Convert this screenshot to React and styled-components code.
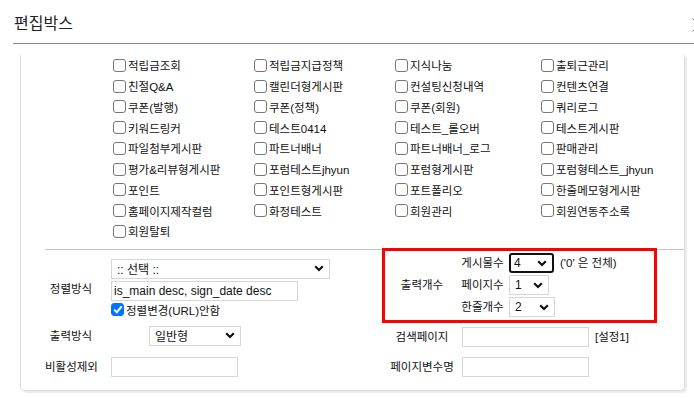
import React from "react"
import styled, { createGlobalStyle } from "styled-components"

const FONT = `"Liberation Sans", "Noto Sans CJK KR", sans-serif`
const LINE_C = "#dcdcdc"
const INPUT_C = "#d6d6d6"

const BOARDS = [
  "적립금조회", "적립금지급정책", "지식나눔", "출퇴근관리",
  "친절Q&A", "캘린더형게시판", "컨설팅신청내역", "컨텐츠연결",
  "쿠폰(발행)", "쿠폰(정책)", "쿠폰(회원)", "쿼리로그",
  "키워드링커", "테스트0414", "테스트_롤오버", "테스트게시판",
  "파일첨부게시판", "파트너배너", "파트너배너_로그", "판매관리",
  "평가&리뷰형게시판", "포럼테스트jhyun", "포럼형게시판", "포럼형테스트_jhyun",
  "포인트", "포인트형게시판", "포트폴리오", "한줄메모형게시판",
  "홈페이지제작컬럼", "화정테스트", "회원관리", "회원연동주소록",
  "회원탈퇴",
]

const GlobalStyle = createGlobalStyle`
  html, body {
    margin: 0;
    padding: 0;
    background: #fff;
    overflow: hidden;
  }
  body {
    font-family: ${FONT};
    font-size: 12px;
    color: #222;
  }
`

const Page = styled.div`
  width: 694px;
  height: 398px;
  overflow: hidden;
`

const Header = styled.header`
  display: flex;
  justify-content: space-between;
  align-items: center;
  height: 43px;
  margin-left: 13px;
  border-bottom: 1px solid #8a8a8a;
`

const Title = styled.h1`
  margin: 0 0 0 1px;
  font-family: "Noto Sans CJK KR", sans-serif;
  font-size: 16px;
  font-weight: normal;
  color: #222;
`

const Close = styled.svg`
  flex: none;
  margin: 6px -12px 0 0;
`

const Body = styled.div`
  padding: 11px 0 0 20px;
`

const Card = styled.div`
  width: 665px;
  box-sizing: border-box;
  border: 1px solid ${LINE_C};
  border-top: none;
  border-radius: 0 0 5px 5px;
  box-shadow: 2px 2px 1px rgba(0, 0, 0, 0.08);
  padding: 0 0 7px 24px;
`

const BoardGrid = styled.div`
  display: grid;
  grid-template-columns: 141px 141px 146px 110px;
  grid-auto-rows: 20.75px;
  align-items: center;
  margin-left: 68px;
`

const BoardItem = styled.label`
  display: flex;
  align-items: center;
  gap: 2px;
  font-size: 11.5px;
  white-space: nowrap;
  color: #111;
`

const Box = styled.span`
  flex: none;
  width: 13px;
  height: 13px;
  box-sizing: border-box;
  border-radius: 3px;
  border: 1px solid ${(p) => (p.$checked ? "#0075ff" : "#767676")};
  background: ${(p) => (p.$checked ? "#0075ff" : "#fff")};
  display: flex;
  align-items: center;
  justify-content: center;
`

const Lower = styled.div`
  display: grid;
  grid-template-columns: 337px 275px;
  margin-top: 7px;
  border-top: 1px solid #c4c4c4;
`

const Field = styled.div`
  display: flex;
  align-items: ${(p) => (p.$center ? "center" : "flex-start")};
  height: ${(p) => p.$h || 30}px;
  padding-top: ${(p) => p.$pt || 0}px;
  box-sizing: border-box;
`

const Label = styled.span`
  flex: none;
  width: ${(p) => p.$w}px;
  text-align: center;
  line-height: 20px;
  font-size: 11.5px;
  white-space: nowrap;
  color: #111;
  padding-top: ${(p) => p.$pt || 0}px;
`

const Stack = styled.div`
  display: flex;
  flex-direction: column;
  gap: 2px;
  margin-left: ${(p) => p.$ml || 0}px;
  padding-top: ${(p) => p.$pt || 0}px;
`

const SelectBox = styled.div`
  display: flex;
  align-items: center;
  justify-content: space-between;
  width: ${(p) => p.$w}px;
  height: 20px;
  box-sizing: border-box;
  margin-left: ${(p) => p.$ml || 0}px;
  padding: 0 5px 0 ${(p) => (p.$focus ? 3 : 5)}px;
  border: ${(p) => (p.$focus ? "2px solid #111" : `1px solid ${INPUT_C}`)};
  border-radius: ${(p) => (p.$focus ? 3 : 0)}px;
  background: #fff;
  font-size: 12px;
  color: #111;
  white-space: nowrap;
`

const TextInput = styled.div`
  width: ${(p) => p.$w}px;
  height: 20px;
  box-sizing: border-box;
  margin-left: ${(p) => p.$ml || 0}px;
  padding: 0 2px;
  border: 1px solid ${INPUT_C};
  font-size: 12px;
  line-height: 18px;
  color: #111;
  white-space: nowrap;
  overflow: hidden;
`

const CheckRow = styled.label`
  display: flex;
  align-items: center;
  gap: 2px;
  height: 14px;
  font-size: 11.5px;
  color: #111;
`

const Note = styled.span`
  margin-left: 6px;
  font-size: 11.5px;
  color: #111;
  white-space: nowrap;
  line-height: 20px;
`

const Highlight = styled.div`
  display: flex;
  align-items: center;
  height: 75px;
  margin-top: -2px;
  box-sizing: border-box;
  border: 3px solid #ff0000;
`

const SubRow = styled.div`
  display: flex;
  align-items: center;
`

const Chevron = () => (
  <svg width="10" height="7" viewBox="0 0 10 7">
    <polyline points="1.2,1.3 5,5 8.8,1.3" fill="none" stroke="#111" strokeWidth="2.2" />
  </svg>
)

const Check = ({ checked }) => (
  <Box $checked={checked}>
    {checked && (
      <svg width="10" height="9" viewBox="0 0 10 9">
        <polyline points="1.2,4.6 3.8,7.2 8.8,1.4" fill="none" stroke="#fff" strokeWidth="2" />
      </svg>
    )}
  </Box>
)

const Select = ({ w, ml, focus, children }) => (
  <SelectBox $w={w} $ml={ml} $focus={focus}>
    <span>{children}</span>
    <Chevron />
  </SelectBox>
)

const App = () => {
  return (
    <Page>
      <GlobalStyle />
      <Header>
        <Title>편집박스</Title>
        <Close width="14" height="14" viewBox="0 0 14 14">
          <path d="M0.5 0.5 L13.5 13.5 M13.5 0.5 L0.5 13.5" stroke="#666" strokeWidth="1" />
        </Close>
      </Header>
      <Body>
        <Card>
          <BoardGrid>
            {BOARDS.map((name) => (
              <BoardItem key={name}>
                <Check />
                {name}
              </BoardItem>
            ))}
          </BoardGrid>

          <Lower>
            <Field $h={73}>
              <Label $w={52} $pt={29}>정렬방식</Label>
              <Stack $ml={14} $pt={9}>
                <Select w={219}>:: 선택 ::</Select>
                <TextInput $w={187}>is_main desc, sign_date desc</TextInput>
                <CheckRow>
                  <Check checked />
                  정렬변경(URL)안함
                </CheckRow>
              </Stack>
            </Field>

            <Highlight>
              <Label $w={74}>출력개수</Label>
              <Stack $ml={1} $pt={0}>
                <SubRow>
                  <Label $w={45}>게시물수</Label>
                  <Select w={45} ml={4} focus>4</Select>
                  <Note>('0' 은 전체)</Note>
                </SubRow>
                <SubRow>
                  <Label $w={45}>페이지수</Label>
                  <Select w={40} ml={4}>1</Select>
                </SubRow>
                <SubRow>
                  <Label $w={45}>한줄개수</Label>
                  <Select w={46} ml={4}>2</Select>
                </SubRow>
              </Stack>
            </Highlight>

            <Field $pt={3}>
              <Label $w={52}>출력방식</Label>
              <Select w={92} ml={52}>일반형</Select>
            </Field>

            <Field $pt={4}>
              <Label $w={80}>검색페이지</Label>
              <TextInput $w={127}></TextInput>
              <Note>[설정1]</Note>
            </Field>

            <Field $pt={4}>
              <Label $w={52}>비활성제외</Label>
              <TextInput $w={127} $ml={14}></TextInput>
            </Field>

            <Field $pt={4}>
              <Label $w={80}>페이지변수명</Label>
              <TextInput $w={127}></TextInput>
            </Field>
          </Lower>
        </Card>
      </Body>
    </Page>
  )
}

export default App
